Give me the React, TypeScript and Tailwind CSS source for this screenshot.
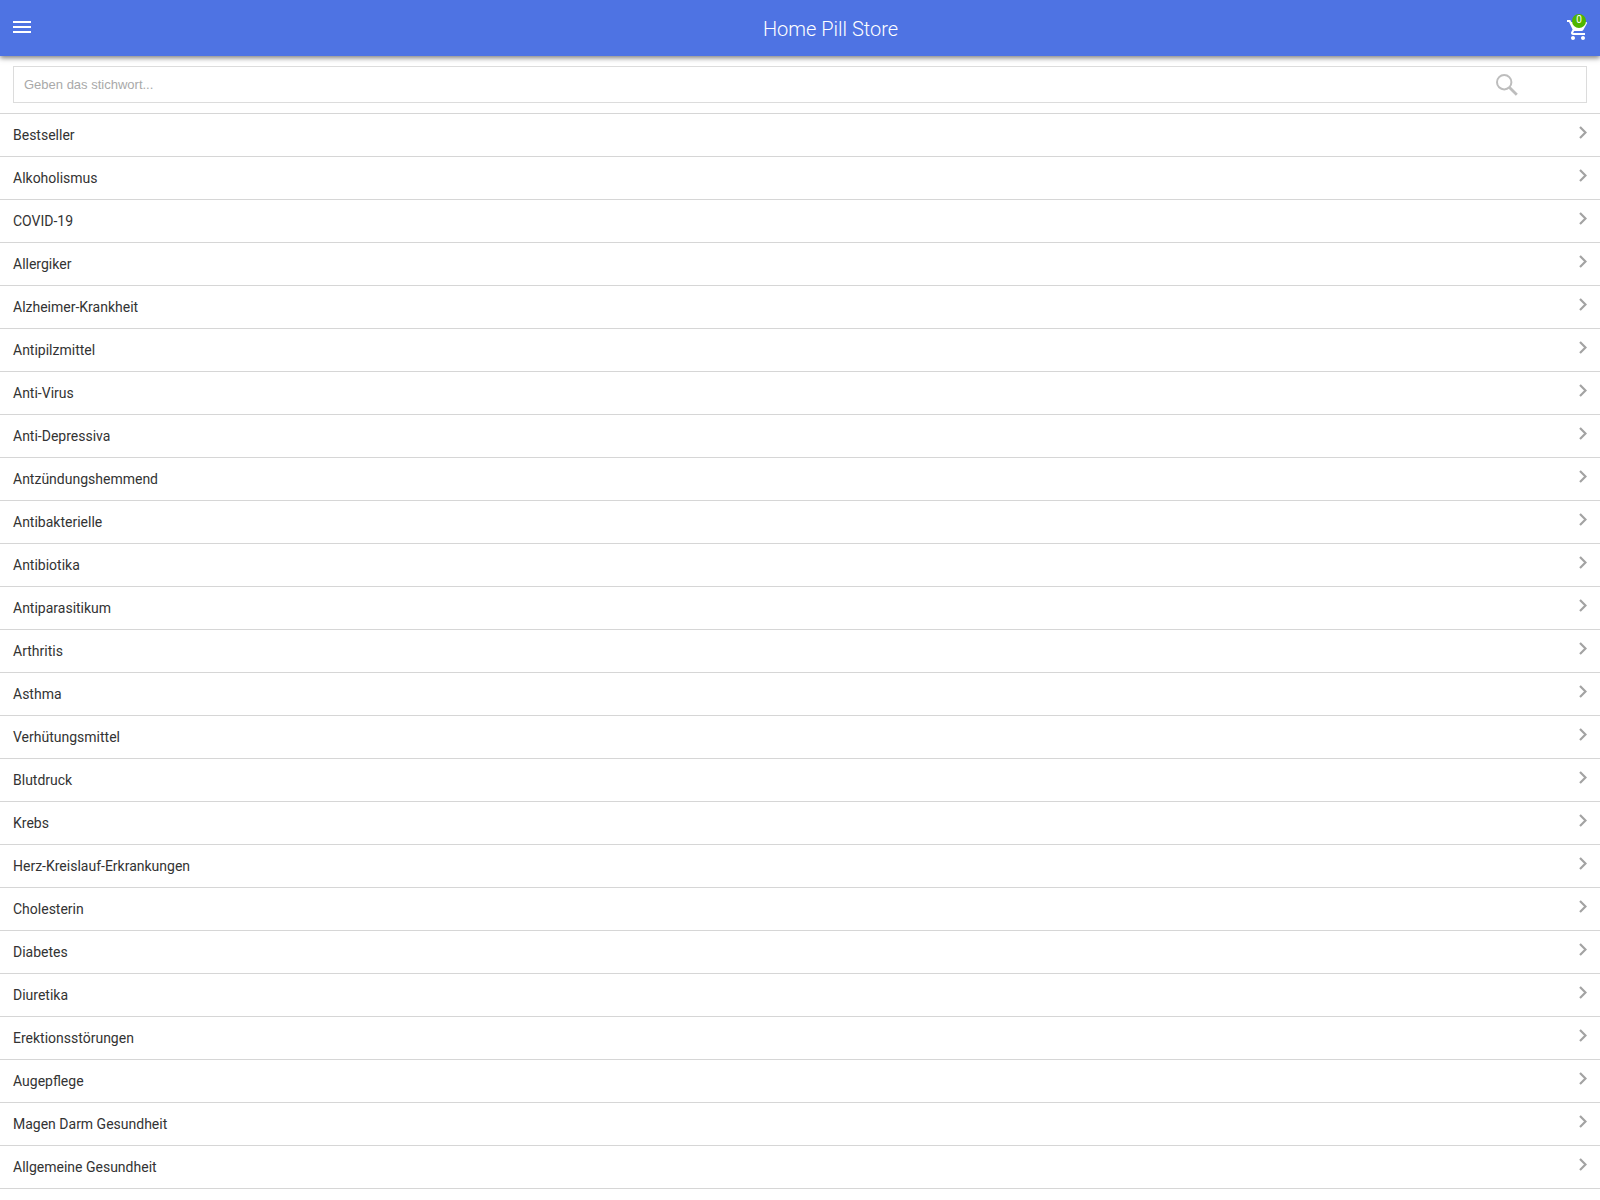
const categories = [
  'Bestseller',
  'Alkoholismus',
  'COVID-19',
  'Allergiker',
  'Alzheimer-Krankheit',
  'Antipilzmittel',
  'Anti-Virus',
  'Anti-Depressiva',
  'Antzündungshemmend',
  'Antibakterielle',
  'Antibiotika',
  'Antiparasitikum',
  'Arthritis',
  'Asthma',
  'Verhütungsmittel',
  'Blutdruck',
  'Krebs',
  'Herz-Kreislauf-Erkrankungen',
  'Cholesterin',
  'Diabetes',
  'Diuretika',
  'Erektionsstörungen',
  'Augepflege',
  'Magen Darm Gesundheit',
  'Allgemeine Gesundheit',
];

function Header() {
  return (
    <header className="relative flex h-14 items-center bg-[#4e73e3] pr-2.5 pl-[13px] text-white shadow-[0_2px_5px_rgba(0,0,0,0.5)]">
      <button type="button" aria-label="Menü" className="-mt-0.5 cursor-pointer">
        <svg width="18" height="12" viewBox="3 6 18 12" fill="currentColor" aria-hidden="true">
          <path d="M3 18h18v-2H3v2zm0-5h18v-2H3v2zm0-7v2h18V6H3z" />
        </svg>
      </button>
      <h1 className="flex-1 pt-0.5 pl-16 text-center text-xl font-light">Home Pill Store</h1>
      <a href="#cart" aria-label="Warenkorb" className="relative mt-1">
        <svg width="24" height="24" viewBox="0 0 24 24" fill="currentColor" aria-hidden="true">
          <path d="M7 18c-1.1 0-1.99.9-1.99 2S5.900 22 7 22s2-.9 2-2-.9-2-2-2zM1 2v2h2l3.600 7.590-1.350 2.450c-.16.28-.25.61-.25.96 0 1.100.9 2 2 2h12v-2H7.420c-.14 0-.25-.11-.25-.25l.03-.12.9-1.630h7.450c.75 0 1.410-.41 1.750-1.030l3.580-6.490c.08-.14.12-.31.12-.48 0-.55-.45-1-1-1H5.210l-.94-2H1zm16 16c-1.100 0-1.990.9-1.990 2s.89 2 1.990 2 2-.9 2-2-.9-2-2-2z" />
        </svg>
        <span className="absolute -top-1 left-1.5 flex size-3.5 items-center justify-center rounded-full bg-[#4eb600] pb-0.5 text-[10px] leading-none">
          0
        </span>
      </a>
    </header>
  );
}

function SearchBar() {
  return (
    <form role="search" className="px-[13px] py-2.5" onSubmit={(e) => e.preventDefault()}>
      <div className="flex h-[37px] items-center border border-[#dcdcdc]">
        <input
          type="text"
          aria-label="Geben das stichwort..."
          placeholder="Geben das stichwort..."
          className="h-full min-w-0 flex-1 px-2.5 font-['Liberation_Sans',sans-serif] text-[13px] text-[#333] outline-none placeholder:text-[#a9a9a9]"
        />
        <button type="submit" aria-label="Suchen" className="mr-[68px] cursor-pointer text-[#bdbdbd]">
          <svg width="22" height="22" viewBox="0 0 22 22" fill="none" stroke="currentColor" aria-hidden="true">
            <circle cx="8.200" cy="8.200" r="7.200" strokeWidth="2" />
            <path d="M13.500 13.500l7.300 7.300" strokeWidth="2.800" />
          </svg>
        </button>
      </div>
    </form>
  );
}

export default function App() {
  return (
    <div className="bg-white font-[Roboto,sans-serif] text-[#333]">
      <Header />
      <main>
        <SearchBar />
        <nav aria-label="Kategorien">
          <ul className="border-t border-[#d6d6d6]">
            {categories.map((name) => (
              <li key={name} className="border-b border-[#d6d6d6]">
                <a href="#category" className="flex h-[42px] items-center justify-between px-[13px] text-sm">
                  {name}
                  <svg width="8" height="13" viewBox="0 0 8 13" fill="none" stroke="#a3a3a3" strokeWidth="2.200" className="mb-[5px]" aria-hidden="true">
                    <path d="M1 1l5.500 5.500L1 12" />
                  </svg>
                </a>
              </li>
            ))}
          </ul>
        </nav>
      </main>
    </div>
  );
}
